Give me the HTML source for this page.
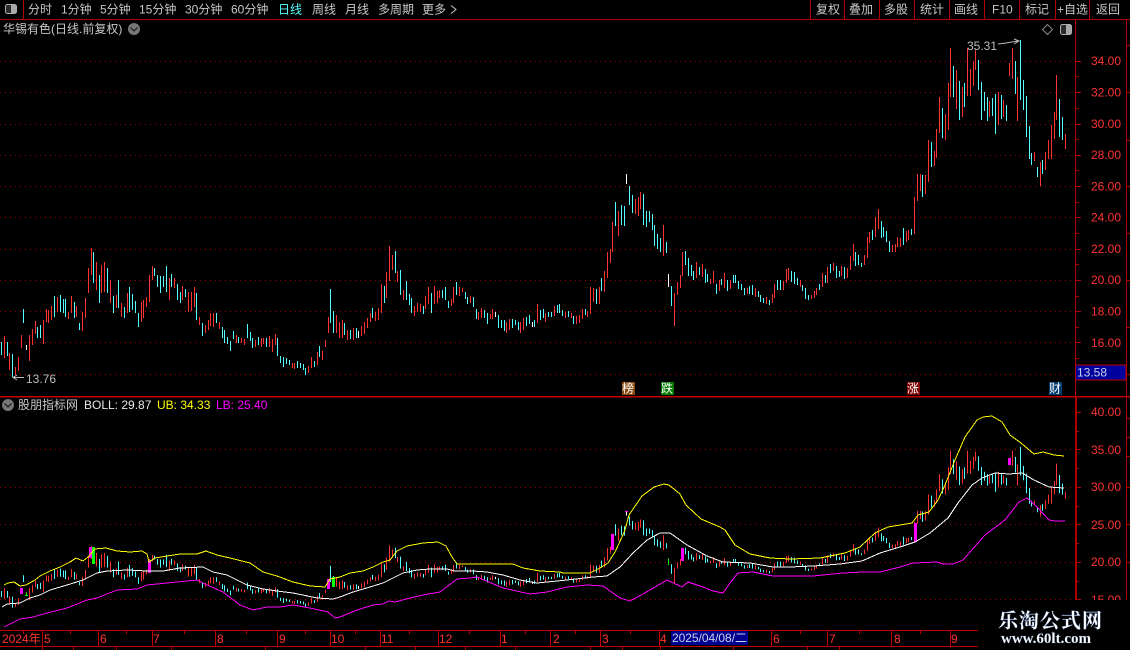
<!DOCTYPE html>
<html lang="zh"><head><meta charset="utf-8"><title>华锡有色</title>
<style>
html,body{margin:0;padding:0;background:#000;width:1130px;height:650px;overflow:hidden}
svg{display:block}
text{font-family:"Liberation Sans","WenQuanYi Zen Hei","Noto Sans CJK SC",sans-serif;font-size:12px;dominant-baseline:central}
.m{fill:#c8c8c8}
.a{fill:#ff3232}
.t{fill:#ff3232}
</style></head><body>
<svg width="1130" height="650" viewBox="0 0 1130 650" xmlns="http://www.w3.org/2000/svg">
<defs>
<g id="bars" fill="none" stroke-width="1">
<path stroke="#ff3232" d="M4.5 336V358M9.5 353V370M15.5 367V375M18.5 357V371M21.5 335V348M29.5 335V361M32.5 329V345M35.5 321V334M43.5 320V344M46.5 309V322M48.5 310V323M51.5 306V320M57.5 297V312M68.5 312V319M71.5 296V313M76.5 306V317M82.5 312V331M85.5 298V318M88.5 268V293M91.5 248V275M96.5 262V290M101.5 265V293M104.5 262V292M110.5 280V303M116.5 295V308M121.5 303V317M127.5 293V313M141.5 302V322M143.5 300V318M146.5 297V307M149.5 275V302M152.5 266V280M169.5 278V300M174.5 278V288M182.5 286V300M188.5 292V312M191.5 292V311M194.5 287V307M199.5 317V325M205.5 325V333M208.5 320V330M210.5 313V326M213.5 313V327M219.5 322V329M236.5 335V343M241.5 338V343M244.5 339V345M255.5 340V347M261.5 338V347M263.5 338V344M269.5 336V347M272.5 339V352M275.5 334V345M292.5 363V368M294.5 363V369M308.5 366V373M311.5 357V368M317.5 352V365M322.5 351V360M325.5 340V347M328.5 317V333M336.5 315V333M339.5 322V338M342.5 320V338M347.5 330V340M353.5 328V340M361.5 326V336M364.5 322V334M367.5 318V328M370.5 313V322M375.5 312V321M378.5 308V320M381.5 284V313M386.5 272V298M389.5 246V281M392.5 255V270M397.5 271V282M403.5 290V300M414.5 306V316M417.5 303V312M420.5 304V312M425.5 296V309M428.5 287V304M434.5 286V304M437.5 291V303M439.5 290V298M451.5 299V306M453.5 287V303M459.5 287V296M462.5 288V292M470.5 296V303M478.5 312V320M481.5 308V318M490.5 314V319M492.5 309V319M506.5 322V333M509.5 319V330M520.5 322V333M523.5 318V330M537.5 304V323M545.5 313V322M554.5 306V316M565.5 312V318M571.5 313V318M576.5 316V324M579.5 315V323M582.5 309V319M587.5 311V317M590.5 287V314M593.5 288V302M599.5 287V304M604.5 271V292M607.5 252V278M610.5 249V263M612.5 222V252M618.5 211V236M635.5 199V214M638.5 197V216M640.5 192V209M663.5 225V256M674.5 293V326M677.5 282V295M680.5 275V288M682.5 252V276M696.5 262V278M702.5 264V277M710.5 279V284M713.5 271V283M719.5 280V291M724.5 273V288M730.5 280V289M747.5 288V294M755.5 288V297M766.5 297V304M772.5 294V303M774.5 284V298M783.5 281V290M786.5 269V283M788.5 268V280M800.5 280V287M811.5 295V299M814.5 291V298M816.5 288V295M822.5 273V287M827.5 267V283M833.5 263V271M841.5 266V276M847.5 268V278M850.5 256V270M853.5 244V261M864.5 255V265M867.5 237V258M869.5 232V243M875.5 217V237M878.5 209V229M892.5 245V252M895.5 244V252M897.5 237V247M900.5 238V247M906.5 231V242M908.5 230V240M914.5 197V234M917.5 174V201M920.5 174V191M925.5 175V194M928.5 140V182M934.5 151V166M936.5 129V158M939.5 97V133M945.5 114V140M948.5 83V130M950.5 48V97M956.5 70V109M962.5 87V117M967.5 48V96M970.5 69V96M973.5 61V86M975.5 50V70M989.5 101V117M998.5 92V125M1003.5 100V117M1009.5 63V76M1012.5 48V79M1017.5 77V121M1034.5 152V161M1040.5 162V186M1045.5 152V170M1048.5 140V159M1051.5 125V159M1054.5 112V139M1056.5 75V120M1065.5 134V149"/>
<path stroke="#54ffff" d="M1.5 342V355M7.5 342V356M12.5 354V377M23.5 309V323M37.5 327V338M40.5 325V338M54.5 296V317M60.5 295V312M63.5 299V313M65.5 299V317M74.5 302V318M79.5 323V330M93.5 252V283M99.5 275V303M107.5 268V293M113.5 296V313M118.5 280V308M124.5 307V318M129.5 287V312M132.5 294V310M135.5 301V313M138.5 313V327M154.5 268V276M157.5 275V287M160.5 276V293M163.5 276V287M166.5 266V292M171.5 274V287M177.5 284V300M180.5 292V303M185.5 289V297M196.5 293V320M202.5 323V336M216.5 313V323M222.5 327V338M224.5 330V343M227.5 337V344M230.5 341V351M233.5 331V339M238.5 337V343M247.5 324V338M250.5 332V341M252.5 338V348M258.5 337V345M266.5 338V347M277.5 338V356M280.5 356V363M283.5 357V367M286.5 358V364M289.5 360V365M297.5 361V368M300.5 363V368M303.5 364V370M305.5 368V375M314.5 361V367M319.5 346V357M330.5 289V323M333.5 311V333M344.5 323V335M350.5 330V339M356.5 328V338M372.5 308V318M384.5 286V303M395.5 251V273M400.5 270V295M406.5 281V300M409.5 294V305M411.5 298V313M423.5 306V314M431.5 293V313M442.5 290V298M445.5 287V300M448.5 301V308M456.5 282V295M465.5 292V299M467.5 297V304M473.5 297V307M476.5 309V319M484.5 310V318M487.5 313V324M498.5 315V328M501.5 320V328M504.5 320V331M512.5 319V328M515.5 320V325M518.5 322V330M526.5 317V326M529.5 315V324M534.5 320V327M540.5 310V320M543.5 309V318M548.5 312V317M551.5 312V317M557.5 305V313M559.5 304V313M562.5 310V316M568.5 311V317M573.5 316V324M585.5 309V315M596.5 289V304M601.5 278V291M615.5 202V226M621.5 205V225M624.5 206V226M629.5 186V205M632.5 195V213M643.5 194V225M646.5 211V227M649.5 211V222M652.5 214V230M654.5 225V246M657.5 234V249M660.5 238V252M666.5 242V253M671.5 286V306M685.5 251V265M688.5 258V276M691.5 265V276M693.5 271V280M699.5 267V275M705.5 269V283M707.5 274V282M716.5 284V294M721.5 279V285M727.5 280V291M733.5 275V283M735.5 275V283M738.5 281V289M741.5 284V290M744.5 288V295M749.5 286V294M752.5 285V295M758.5 291V297M760.5 295V302M763.5 298V303M769.5 300V305M777.5 280V290M780.5 280V290M791.5 271V282M794.5 272V284M797.5 278V285M802.5 285V291M805.5 288V299M808.5 295V300M819.5 284V290M825.5 275V283M830.5 264V273M836.5 266V278M839.5 271V277M844.5 267V279M855.5 252V266M858.5 255V265M861.5 263V267M872.5 230V240M881.5 221V238M883.5 227V237M886.5 231V242M889.5 241V252M903.5 228V245M911.5 229V235M922.5 175V197M931.5 142V167M942.5 108V138M953.5 66V97M959.5 81V120M964.5 83V107M978.5 60V90M981.5 82V120M984.5 92V111M987.5 97V121M992.5 98V116M995.5 94V134M1001.5 95V119M1006.5 105V121M1015.5 61V94M1020.5 40V100M1023.5 80V110M1026.5 96V137M1029.5 126V159M1031.5 153V165M1037.5 167V177M1042.5 160V174M1059.5 99V137M1062.5 117V140"/>
<path stroke="#ffffff" d="M26.5 345V350M358.5 331V338M495.5 312V317M532.5 322V327M626.5 174V184M668.5 274V287"/>
</g>
</defs>

<!-- top bar -->
<rect x="0" y="19" width="1130" height="1" fill="#b00000"/>
<rect x="23" y="0" width="1" height="19" fill="#b00000"/>
<g fill="#b00000"><rect x="810" y="0" width="1" height="19"/><rect x="844" y="0" width="1" height="19"/><rect x="879" y="0" width="1" height="19"/><rect x="914" y="0" width="1" height="19"/><rect x="949" y="0" width="1" height="19"/><rect x="984" y="0" width="1" height="19"/><rect x="1019" y="0" width="1" height="19"/><rect x="1055" y="0" width="1" height="19"/><rect x="1089" y="0" width="1" height="19"/></g>
<rect x="5.5" y="4.5" width="11" height="9" rx="2" fill="#2a2a2a" stroke="#b0b0b0"/><rect x="11" y="5" width="5" height="8" fill="#a8a8a8"/>
<g class="m">
<text x="28" y="9.5">分时</text><text x="61" y="9.5">1分钟</text><text x="100" y="9.5">5分钟</text><text x="139" y="9.5">15分钟</text><text x="185" y="9.5">30分钟</text><text x="231" y="9.5">60分钟</text>
<text x="278" y="9.5" style="fill:#55ffff">日线</text><text x="312" y="9.5">周线</text><text x="345" y="9.5">月线</text><text x="378" y="9.5">多周期</text><text x="422" y="9.5">更多</text>
<text x="816" y="9.5">复权</text><text x="849" y="9.5">叠加</text><text x="884" y="9.5">多股</text><text x="920" y="9.5">统计</text><text x="954" y="9.5">画线</text><text x="992" y="9.5">F10</text><text x="1025" y="9.5">标记</text><text x="1057" y="9.5">+自选</text><text x="1096" y="9.5">返回</text>
<text x="3" y="29">华锡有色(日线.前复权)</text>
<text x="18" y="405">股朋指标网</text>
</g>
<path d="M451 6l5 4-5 4" fill="none" stroke="#c8c8c8" transform="translate(0,-0.5)"/>
<circle cx="134" cy="29" r="6" fill="#777"/><path d="M130.5 27.5l3.5 3.5 3.5-3.5" fill="none" stroke="#222" stroke-width="1.3"/>
<circle cx="8" cy="405" r="6" fill="#777"/><path d="M4.5 403.5l3.5 3.5 3.5-3.5" fill="none" stroke="#222" stroke-width="1.3"/>
<path d="M1047.5 24.5l5 5-5 5-5-5z" fill="none" stroke="#8a8a8a"/>
<rect x="1060.5" y="24.5" width="11" height="10" rx="2" fill="#2a2a2a" stroke="#b0b0b0"/><rect x="1066" y="25" width="5" height="9" fill="#a8a8a8"/>

<!-- grid -->
<g stroke="#a00000" stroke-width="1" stroke-dasharray="1 4" fill="none" shape-rendering="crispEdges">
<path d="M0 61.5H1072M0 92.5H1072M0 124.5H1072M0 155.5H1072M0 186.5H1072M0 217.5H1072M0 249.5H1072M0 280.5H1072M0 311.5H1072M0 342.5H1072M0 374.5H1072"/>
<path d="M0 449.5H1072M0 487.5H1072M0 524.5H1072M0 562.5H1072M0 599.5H1072"/>
</g>

<!-- upper candles -->
<use href="#bars" shape-rendering="crispEdges"/>
<!-- lower candles -->
<use href="#bars" shape-rendering="crispEdges" transform="translate(0,427.8) scale(1,0.4773)"/>

<!-- markers in lower pane -->
<g fill="#ff00ff"><rect x="20" y="588" width="3" height="6"/><rect x="89" y="547" width="3" height="11"/><rect x="148" y="560" width="3" height="13"/><rect x="327" y="579" width="3" height="10"/><rect x="611" y="534" width="3" height="16"/><rect x="681" y="548" width="3" height="13"/><rect x="914" y="523" width="3" height="19"/><rect x="1008" y="458" width="3" height="7"/><rect x="625" y="511" width="3" height="1"/></g>
<g fill="#00ff00"><rect x="92" y="547" width="3" height="17"/><rect x="332" y="577" width="3" height="10"/><rect x="668" y="559" width="1" height="6"/><rect x="26" y="593" width="1" height="3"/><rect x="25" y="595" width="3" height="1"/></g>

<!-- boll lines -->
<g fill="none" stroke-width="1" shape-rendering="crispEdges">
<polyline stroke="#ffff00" points="4,585 8,583 14,582 20,586 26,585 35,580 40,576 50,571 60,567 70,562 76,558 83,561 88,557 95,549 106,548 117,551 130,552 142,551 147,554 149,562 155,558 167,556 180,554 197,554 206,551 217,555 230,558 250,563 263,572 277,576 293,582 310,586 325,587 330,579 340,577 350,573 363,571 373,567 383,562 390,560 397,551 407,546 423,543 438,542 446,546 452,557 457,564 513,564 523,568 540,571 560,572 563,573 590,573 600,568 608,563 615,552 622,537 625,530 629,515 642,496 654,487 664,484 669,485 680,494 686,505 701,519 720,527 725,530 735,545 750,554 770,558 790,559 820,558 845,553 860,547 875,533 888,527 912,523 918,515 929,512 938,500 945,485 955,460 965,437 977,420 983,417 992,416 1002,422 1010,435 1021,443 1034,454 1043,452 1054,455 1064,456"/>
<polyline stroke="#ffffff" points="2,607 7,604 20,603 30,598 40,595 50,590 67,585 83,580 97,573 107,571 127,570 147,571 163,571 180,568 203,567 213,572 227,575 247,585 263,589 277,591 293,593 317,598 333,599 340,597 353,592 370,587 383,583 393,578 403,573 417,570 430,569 447,569 455,571 473,571 487,572 503,575 520,580 537,583 567,580 593,577 607,576 620,567 633,553 647,540 660,533 670,533 687,545 707,556 723,562 750,563 773,567 790,567 813,566 840,564 862,561 880,553 900,547 915,542 930,533 948,518 958,503 972,485 982,478 995,473 1009,474 1022,473 1034,480 1049,487 1064,488"/>
<polyline stroke="#ff00ff" points="4,627 20,619 33,617 47,613 67,608 87,600 97,598 117,590 137,589 147,585 167,583 197,580 207,585 223,592 240,605 253,610 267,607 280,607 293,605 310,608 328,612 335,618 340,617 357,610 373,605 383,604 389,601 395,602 410,598 423,595 440,592 457,579 470,578 477,577 503,588 530,594 547,592 567,587 587,585 603,586 620,598 630,601 643,594 667,580 682,587 688,582 703,587 713,591 723,593 730,583 738,573 753,572 773,576 790,576 813,576 843,573 863,572 880,572 900,567 913,563 937,562 943,564 953,564 963,560 985,535 1005,520 1019,502 1027,498 1037,507 1049,520 1055,521 1065,521"/>
</g>

<!-- separators and axes -->
<rect x="0" y="396" width="1130" height="1.5" fill="#c00000"/>
<rect x="1075" y="19" width="1" height="377" fill="#b00000"/>
<rect x="1075" y="397" width="2" height="203" fill="#b00000"/>
<rect x="1126" y="19" width="1" height="581" fill="#b00000"/>
<path fill="none" stroke="#b00000" d="M1076 61.5h5M1076 76.5h3M1076 92.5h5M1076 108.5h3M1076 124.5h5M1076 139.5h3M1076 155.5h5M1076 170.5h3M1076 186.5h5M1076 202.5h3M1076 217.5h5M1076 233.5h3M1076 249.5h5M1076 264.5h3M1076 280.5h5M1076 296.5h3M1076 311.5h5M1076 327.5h3M1076 342.5h5M1076 358.5h3M1076 412.5h5M1076 431.5h3M1076 449.5h5M1076 468.5h3M1076 487.5h5M1076 506.5h3M1076 524.5h5M1076 543.5h3M1076 562.5h5M1076 581.5h3M1076 599.5h5M1127 45.5h3M1127 92.5h3M1127 140.5h3M1127 186.5h3M1127 233.5h3M1127 280.5h3M1127 327.5h3M1127 374.5h3M1127 418.5h3M1127 437.5h3M1127 456.5h3M1127 487.5h3M1127 524.5h3M1127 562.5h3"/>
<g class="a">
<text x="1091" y="61">34.00</text><text x="1091" y="92.5">32.00</text><text x="1091" y="124">30.00</text><text x="1091" y="155">28.00</text><text x="1091" y="186.5">26.00</text><text x="1091" y="217.5">24.00</text><text x="1091" y="249">22.00</text><text x="1091" y="280">20.00</text><text x="1091" y="311.5">18.00</text><text x="1091" y="343">16.00</text>
<text x="1091" y="412">40.00</text><text x="1091" y="450">35.00</text><text x="1091" y="487">30.00</text><text x="1091" y="525">25.00</text><text x="1091" y="562">20.00</text><text x="1091" y="600">15.00</text>
</g>
<rect x="1075.5" y="365" width="50.5" height="15" fill="#00009c" stroke="#c00000"/>
<text x="1077" y="372.5" fill="#c8d0e8">13.58</text>

<!-- annotations -->
<text x="967" y="46" fill="#bdbdbd">35.31</text>
<path d="M998 44l8-1 12-2M1014 39l5 2-5 3" fill="none" stroke="#bdbdbd"/>
<text x="26" y="379" fill="#bdbdbd">13.76</text>
<path d="M24 377.5H13M17 375l-4 2.5 4 2.5" fill="none" stroke="#bdbdbd"/>
<g>
<rect x="622" y="382" width="13" height="13" fill="#8a4a10"/><text x="622" y="388.5" fill="#fff">榜</text>
<rect x="661" y="382" width="13" height="13" fill="#007a00"/><text x="661" y="388.5" fill="#fff">跌</text>
<rect x="907" y="382" width="13" height="13" fill="#7d0000"/><text x="907" y="388.5" fill="#fff">涨</text>
<rect x="1049" y="382" width="13" height="13" fill="#003a6e"/><text x="1049" y="388.5" fill="#fff">财</text>
</g>

<!-- indicator title -->
<text x="84" y="405" fill="#e8e8e8">BOLL: 29.87</text>
<text x="157" y="405" fill="#ffff00">UB: 34.33</text>
<text x="216" y="405" fill="#ff00ff">LB: 25.40</text>

<!-- watermark box -->
<rect x="978" y="600" width="152" height="50" fill="#000"/>
<text x="998" y="619" style="font-family:'Noto Serif CJK SC','Liberation Serif',serif;font-size:20px;font-weight:700;letter-spacing:1px;fill:#fff;stroke:#5f7fb8;stroke-width:.3">乐淘公式网</text>
<text x="1001" y="639" style="font-family:'Liberation Serif',serif;font-size:15px;font-weight:700;fill:#fff;stroke:#5f7fb8;stroke-width:.2">www.60lt.com</text>

<!-- time axis -->
<rect x="0" y="630" width="978" height="1" fill="#c00000"/>
<rect x="0" y="646" width="978" height="1" fill="#c00000"/>
<path fill="none" stroke="#c00000" d="M42.5 631V646M98.5 631V646M152.5 631V646M215.5 631V646M277.5 631V646M330.5 631V646M380.5 631V646M438.5 631V646M500.5 631V646M550.5 631V646M600.5 631V646M659.5 631V646M771.5 631V646M827.5 631V646M891.5 631V646M950.5 631V646M23.5 631v3M70.5 631v3M126.5 631v3M184.5 631v3M246.5 631v3M305.5 631v3M355.5 631v3M409.5 631v3M469.5 631v3M525.5 631v3M575.5 631v3M630.5 631v3M700.5 631v3M735.5 631v3M800.5 631v3M859.5 631v3M920.5 631v3M42.5 647v3M73.5 647v3M116.5 647v3M171.5 647v3M265.5 647v3M365.5 647v3M415.5 647v3M465.5 647v3M515.5 647v3M590.5 647v3M622.5 647v3M660.5 647v3M733.5 647v3M807.5 647v3M839.5 647v3"/>
<g class="t">
<text x="2" y="639">2024年</text><text x="44" y="639">5</text><text x="100" y="639">6</text><text x="153" y="639">7</text><text x="217" y="639">8</text><text x="279" y="639">9</text><text x="331" y="639">10</text><text x="381" y="639">11</text><text x="439" y="639">12</text><text x="501" y="639">1</text><text x="553" y="639">2</text><text x="602" y="639">3</text><text x="660" y="639">4</text><text x="773" y="639">6</text><text x="829" y="639">7</text><text x="894" y="639">8</text><text x="951" y="639">9</text>
</g>
<rect x="671" y="631" width="77" height="14" fill="#000090"/>
<text x="672" y="638" fill="#c8d0e8" textLength="75">2025/04/08/二</text>
</svg>
</body></html>
